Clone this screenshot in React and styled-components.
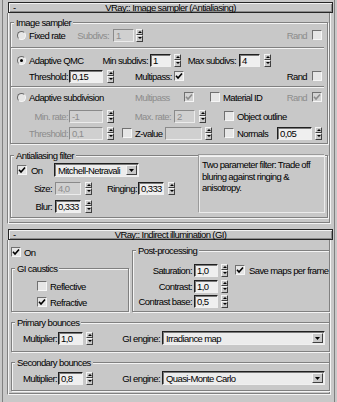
import React from 'react';
import styled, { createGlobalStyle } from 'styled-components';

// --- palette
const bg = '#c8c8c8';
const dark = '#808080';
const light = '#f4f4f4';
const dimText = '#8c8c8c';

const px = (v) => (v === 'auto' ? 'auto' : `${v || 0}px`);

const GlobalStyle = createGlobalStyle`
  * { box-sizing: border-box; }
  html, body { margin: 0; padding: 0; background: ${bg}; }
  body {
    font-family: "Liberation Sans", Arial, sans-serif;
    font-size: 9.5px;
    letter-spacing: -0.6px;
    color: #000;
  }
`;

// --- frame
const Panel = styled.div`
  width: 333px;
  height: 402px;
  margin-left: 2px;
  padding: 2px 3px 0 4px;
  border-left: 1px solid ${dark};
  border-right: 1px solid ${dark};
  overflow: hidden;
`;

const Rollout = styled.section`
  margin-top: ${(p) => px(p.$mt)};
`;

const HeaderBar = styled.div`
  display: grid;
  grid-template-columns: 1fr auto 1fr;
  align-items: center;
  height: 11px;
  margin: 0 -2px 0 1px;
  border: 1px solid #262626;
  background: ${bg};
  box-shadow: inset 1px 1px #f2f2f2, inset -1px -1px #8c8c8c;
  line-height: 9px;
`;

const Minus = styled.span`
  padding-left: 4px;
`;

const RollBody = styled.div`
  border-left: 1px solid ${dark};
  border-right: 1px solid ${light};
  border-bottom: 1px solid ${light};
  box-shadow: inset 1px 0 ${light}, inset -1px -1px ${dark};
  padding: ${(p) => `${p.$pt}px ${p.$pr}px ${p.$pb}px ${p.$pl}px`};
`;

const Group = styled.fieldset`
  min-width: 0;
  margin: ${(p) => px(p.$mt)} 0 0 ${(p) => px(p.$ml)};
  padding: 0 0 ${(p) => px(p.$pb)} 0;
  width: ${(p) => (p.$w ? `${p.$w}px` : 'auto')};
  flex: ${(p) => (p.$grow ? '1' : 'none')};
  border: 1px solid ${dark};
  box-shadow: inset 1px 1px ${light}, 1px 1px ${light};
`;

const Legend = styled.legend`
  margin-left: 3px;
  padding: 0 2px;
  line-height: 11px;
  background: ${bg};
`;

const Sep = styled.div`
  height: 2px;
  margin: ${(p) => px(p.$mt)} 3px 0 0;
  border-top: 1px solid ${dark};
  border-bottom: 1px solid ${light};
`;

const Split = styled.div`
  display: flex;
  align-items: ${(p) => (p.$stretch ? 'stretch' : 'flex-start')};
`;

const Column = styled.div`
  flex: none;
  width: ${(p) => (p.$w ? `${p.$w}px` : 'auto')};
`;

const Row = styled.div`
  display: flex;
  align-items: center;
  height: ${(p) => p.$h || 16}px;
  margin-top: ${(p) => px(p.$mt)};
  padding-right: 5px;
`;

const Label = styled.span`
  flex: none;
  white-space: nowrap;
  width: ${(p) => (p.$w ? `${p.$w}px` : 'auto')};
  margin-left: ${(p) => px(p.$ml)};
  text-align: ${(p) => (p.$right ? 'right' : 'left')};
  color: ${(p) => (p.$dim ? dimText : '#000')};
`;

// --- controls
const Field = styled.div`
  flex: none;
  width: ${(p) => p.$w}px;
  height: 13px;
  margin-left: ${(p) => px(p.$ml)};
  padding-left: 2px;
  line-height: 11px;
  border: 1px solid;
  border-color: ${(p) =>
    p.$dim ? '#8a8a8a #ececec #ececec #8a8a8a' : '#202020 #f0f0f0 #f0f0f0 #202020'};
  box-shadow: ${(p) => (p.$dim ? 'none' : 'inset 1px 1px #7a7a7a')};
  background: ${(p) => (p.$dim ? '#d0d0d0' : '#efefef')};
  color: ${(p) => (p.$dim ? dimText : '#000')};
`;

const SpinBox = styled.div`
  flex: none;
  display: flex;
  flex-direction: column;
  width: 7px;
  height: 13px;
  margin-left: ${(p) => px(p.$ml)};
`;

const RaisedBtn = styled.span`
  display: flex;
  align-items: center;
  justify-content: center;
  border: 1px solid;
  border-color: #f4f4f4 #404040 #404040 #f4f4f4;
  background: ${bg};
`;

const SpinBtn = styled(RaisedBtn)`
  flex: 1;
`;

const Spin = ({ ml }) => (
  <SpinBox $ml={ml}>
    <SpinBtn>
      <svg width="4" height="2" viewBox="0 0 4 2">
        <path d="M2 0L4 2H0z" fill="#000" />
      </svg>
    </SpinBtn>
    <SpinBtn>
      <svg width="4" height="2" viewBox="0 0 4 2">
        <path d="M0 0h4L2 2z" fill="#000" />
      </svg>
    </SpinBtn>
  </SpinBox>
);

const CheckBox = styled.span`
  flex: none;
  display: flex;
  align-items: center;
  justify-content: center;
  width: 10px;
  height: 10px;
  margin-left: ${(p) => px(p.$ml)};
  border: 1px solid;
  border-color: #707070 #f6f6f6 #f6f6f6 #707070;
  background: ${(p) => (p.$dim ? '#d4d4d4' : '#e6e6e6')};
`;

const Check = ({ ml, on, dim }) => (
  <CheckBox $ml={ml} $dim={dim}>
    {on && (
      <svg width="8" height="8" viewBox="0 0 8 8">
        <path
          d="M1 3.8L3 6L7 1.5"
          stroke={dim ? '#8c8c8c' : '#000'}
          strokeWidth="1.6"
          fill="none"
        />
      </svg>
    )}
  </CheckBox>
);

const RadioBox = styled.span`
  flex: none;
  display: flex;
  align-items: center;
  justify-content: center;
  width: 9px;
  height: 9px;
  margin-left: ${(p) => px(p.$ml)};
  border-radius: 50%;
  border: 1px solid;
  border-color: #6a6a6a #f6f6f6 #f6f6f6 #6a6a6a;
  background: #e6e6e6;
`;

const Dot = styled.span`
  width: 3px;
  height: 3px;
  border-radius: 50%;
  background: #000;
`;

const Radio = ({ ml, on }) => <RadioBox $ml={ml}>{on && <Dot />}</RadioBox>;

const SelectBox = styled.div`
  flex: none;
  display: flex;
  align-items: center;
  width: ${(p) => p.$w}px;
  height: 14px;
  margin-left: ${(p) => px(p.$ml)};
  padding: 0 1px 0 3px;
  border: 1px solid;
  border-color: #202020 #f0f0f0 #f0f0f0 #202020;
  box-shadow: inset 1px 1px #7a7a7a;
  background: #ececec;
`;

const SelectText = styled.span`
  flex: 1;
  white-space: nowrap;
`;

const DropBtn = styled(RaisedBtn)`
  width: 11px;
  height: 10px;
`;

const Select = ({ ml, w, children }) => (
  <SelectBox $ml={ml} $w={w}>
    <SelectText>{children}</SelectText>
    <DropBtn>
      <svg width="5" height="3" viewBox="0 0 5 3">
        <path d="M0 0h5L2.5 3z" fill="#000" />
      </svg>
    </DropBtn>
  </SelectBox>
);

const Note = styled.div`
  flex: none;
  width: 126px;
  height: 58px;
  margin-top: -6px;
  padding: 3px 2px;
  line-height: 11.5px;
  border: 1px solid #ececec;
  box-shadow: -1px -1px 0 #9a9a9a;
`;

const RollHeader = ({ title }) => (
  <HeaderBar>
    <Minus>-</Minus>
    <span>{title}</span>
    <span />
  </HeaderBar>
);

// --- page
const App = () => (
  <>
    <GlobalStyle />
    <Panel>
      <Rollout>
        <RollHeader title="VRay:: Image sampler (Antialiasing)" />
        <RollBody $pt={4} $pr={2} $pb={5} $pl={2}>
          <Group $pb={3}>
            <Legend>Image sampler</Legend>
            <Row $h={14}>
              <Radio ml={6} />
              <Label $ml={3} $w={40}>Fixed rate</Label>
              <Label $w={40} $right $dim>Subdivs:</Label>
              <Field $ml={4} $w={21} $dim>1</Field>
              <Spin ml={2} />
              <Label $ml="auto" $dim>Rand</Label>
              <Check ml={5} />
            </Row>
            <Sep $mt={5} />
            <Row $mt={3}>
              <Radio ml={6} on />
              <Label $ml={3} $w={52}>Adaptive QMC</Label>
              <Label $w={67} $right>Min subdivs:</Label>
              <Field $ml={2} $w={21}>1</Field>
              <Spin ml={3} />
              <Label $w={55} $right>Max subdivs:</Label>
              <Field $ml={3} $w={21}>4</Field>
              <Spin ml={4} />
            </Row>
            <Row>
              <Label $w={57} $right>Threshold:</Label>
              <Field $ml={1} $w={34}>0,15</Field>
              <Spin ml={4} />
              <Label $ml={21} $w={37}>Multipass:</Label>
              <Check ml={2} on />
              <Label $ml="auto">Rand</Label>
              <Check ml={5} />
            </Row>
            <Sep $mt={2} />
            <Row $h={18}>
              <Radio ml={6} />
              <Label $ml={3} $w={80}>Adaptive subdivision</Label>
              <Label $ml={26} $w={36} $dim>Multipass</Label>
              <Check ml={13} on dim />
              <Check ml={16} />
              <Label $ml={3}>Material ID</Label>
              <Label $ml="auto" $dim>Rand</Label>
              <Check ml={5} on dim />
            </Row>
            <Row $h={20}>
              <Label $w={57} $right $dim>Min. rate:</Label>
              <Field $ml={1} $w={34} $dim>-1</Field>
              <Spin ml={4} />
              <Label $w={57} $right $dim>Max. rate:</Label>
              <Field $ml={3} $w={21} $dim>2</Field>
              <Spin ml={4} />
              <Check ml={18} />
              <Label $ml={3}>Object outline</Label>
            </Row>
            <Row $h={14}>
              <Label $w={57} $right $dim>Threshold:</Label>
              <Field $ml={1} $w={34} $dim>0,1</Field>
              <Spin ml={4} />
              <Check ml={8} />
              <Label $ml={3} $w={27}>Z-value</Label>
              <Field $ml={3} $w={37} $dim />
              <Spin ml={3} />
              <Check ml={12} />
              <Label $ml={3} $w={37}>Normals</Label>
              <Field $ml={3} $w={35}>0,05</Field>
              <Spin ml={3} />
            </Row>
          </Group>

          <Group $mt={6} $pb={2}>
            <Legend>Antialiasing filter</Legend>
            <Split>
              <Column $w={188}>
                <Row $h={18}>
                  <Check ml={6} on />
                  <Label $ml={4} $w={20}>On</Label>
                  <Select ml={3} w={85}>Mitchell-Netravali</Select>
                </Row>
                <Row $h={18}>
                  <Label $w={41} $right>Size:</Label>
                  <Field $ml={3} $w={26} $dim>4,0</Field>
                  <Spin ml={4} />
                  <Label $w={45} $right>Ringing:</Label>
                  <Field $ml={1} $w={26}>0,333</Field>
                  <Spin ml={4} />
                </Row>
                <Row $h={18}>
                  <Label $w={41} $right>Blur:</Label>
                  <Field $ml={3} $w={26}>0,333</Field>
                  <Spin ml={4} />
                </Row>
              </Column>
              <Note>Two parameter filter: Trade off bluring against ringing &amp; anisotropy.</Note>
            </Split>
          </Group>
        </RollBody>
      </Rollout>

      <Rollout $mt={5}>
        <RollHeader title="VRay:: Indirect illumination (GI)" />
        <RollBody $pt={0} $pr={0} $pb={3} $pl={3}>
          <Split $stretch>
            <Column>
              <Row $h={14} $mt={5}>
                <Check on />
                <Label $ml={3}>On</Label>
              </Row>
              <Group $w={118} $mt={4} $pb={1}>
                <Legend>GI caustics</Legend>
                <Row $mt={4}>
                  <Check ml={25} />
                  <Label $ml={3}>Reflective</Label>
                </Row>
                <Row>
                  <Check ml={25} on />
                  <Label $ml={3}>Refractive</Label>
                </Row>
              </Group>
            </Column>
            <Group $grow $ml={3} $mt={5}>
              <Legend>Post-processing</Legend>
              <Row $mt={6}>
                <Label $w={59} $right>Saturation:</Label>
                <Field $ml={2} $w={24}>1,0</Field>
                <Spin ml={3} />
                <Check ml={7} on />
                <Label $ml={4}>Save maps per frame</Label>
              </Row>
              <Row>
                <Label $w={59} $right>Contrast:</Label>
                <Field $ml={2} $w={24}>1,0</Field>
                <Spin ml={3} />
              </Row>
              <Row $h={14}>
                <Label $w={59} $right>Contrast base:</Label>
                <Field $ml={2} $w={24}>0,5</Field>
                <Spin ml={3} />
              </Row>
            </Group>
          </Split>

          <Group $mt={5} $pb={5}>
            <Legend>Primary bounces</Legend>
            <Row $mt={2}>
              <Label $w={45} $right>Multiplier:</Label>
              <Field $ml={1} $w={25}>1,0</Field>
              <Spin ml={3} />
              <Label $w={67} $right>GI engine:</Label>
              <Select ml={2} w={163}>Irradiance map</Select>
            </Row>
          </Group>

          <Group $mt={5} $pb={4}>
            <Legend>Secondary bounces</Legend>
            <Row $mt={2}>
              <Label $w={45} $right>Multiplier:</Label>
              <Field $ml={1} $w={25}>0,8</Field>
              <Spin ml={3} />
              <Label $w={67} $right>GI engine:</Label>
              <Select ml={2} w={163}>Quasi-Monte Carlo</Select>
            </Row>
          </Group>
        </RollBody>
      </Rollout>
    </Panel>
  </>
);

export default App;
